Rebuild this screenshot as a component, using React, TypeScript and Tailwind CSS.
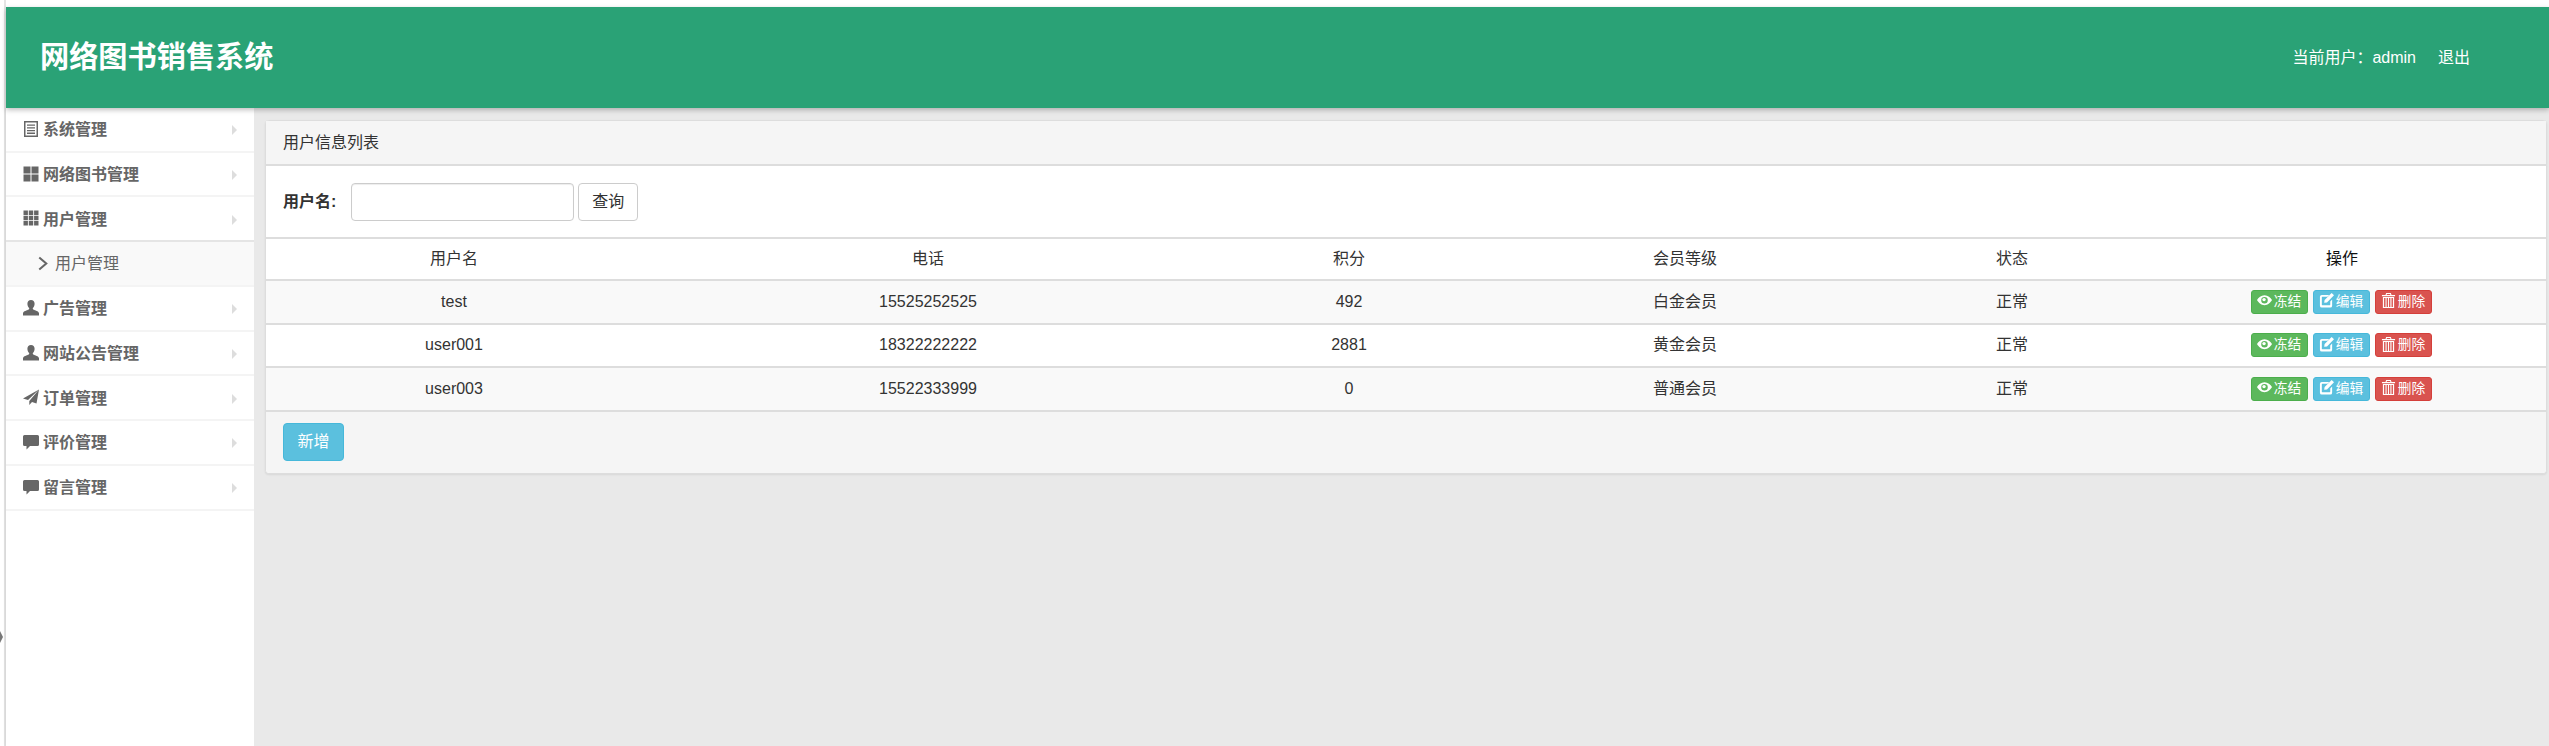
import React from "react";

const font = { fontFamily: '"Liberation Sans", "Noto Sans CJK SC", sans-serif' };

type IconProps = { className?: string };
const ListAlt = ({ className }: IconProps) => (
  <svg viewBox="0 0 16 16" className={className} fill="currentColor"><path fillRule="evenodd" d="M1 0h14v16H1zM2.500 1.500v13h11v-13z" /><path d="M4 3.500h8v1.300H4zM4 6.200h8v1.300H4zM4 8.900h8v1.300H4zM4 11.600h8v1.300H4z" /></svg>
);
const ThLarge = ({ className }: IconProps) => (
  <svg viewBox="0 0 16 16" className={className} fill="currentColor"><path d="M.5 .5h7v7h-7zM8.500 .5h7v7h-7zM.5 8.500h7v7h-7zM8.500 8.500h7v7h-7z" /></svg>
);
const Th = ({ className }: IconProps) => (
  <svg viewBox="0 0 16 16" className={className} fill="currentColor"><path d="M.5 .5h4.400v4.400H.5zM5.800 .5h4.400v4.400H5.800zM11.100 .5h4.400v4.400h-4.400zM.5 5.800h4.400v4.400H.5zM5.800 5.800h4.400v4.400H5.800zM11.100 5.800h4.400v4.400h-4.400zM.5 11.100h4.400v4.400H.5zM5.800 11.100h4.400v4.400H5.800zM11.100 11.100h4.400v4.400h-4.400z" /></svg>
);
const User = ({ className }: IconProps) => (
  <svg viewBox="0 0 16 16" className={className} fill="currentColor"><path d="M8 0c2.200 0 3.600 1.600 3.600 3.800 0 1.800-.8 3.400-1.700 4.300-.3.4-.2 1 .3 1.300 2 .9 5.300 1.700 5.800 3.600V15.500H0V13c.5-1.900 3.800-2.700 5.800-3.600.5-.3.6-.9.3-1.300C5.200 7.200 4.400 5.600 4.400 3.800 4.400 1.600 5.800 0 8 0z" /></svg>
);
const Send = ({ className }: IconProps) => (
  <svg viewBox="0 0 16 16" className={className} fill="currentColor"><path d="M16 .5 0 9.500l5 1.500zM16 .5 6.300 12v4l2.700-3 4.500 1.500z" /></svg>
);
const Comment = ({ className }: IconProps) => (
  <svg viewBox="0 0 16 16" className={className} fill="currentColor"><path d="M1.500 1h13A1.500 1.500 0 0 1 16 2.500v8a1.500 1.500 0 0 1-1.500 1.500H7l-3.500 3.500V12h-2A1.500 1.500 0 0 1 0 10.500v-8A1.500 1.500 0 0 1 1.500 1z" /></svg>
);
const Eye = ({ className }: IconProps) => (
  <svg viewBox="0 0 16 16" className={className} fill="currentColor"><path fillRule="evenodd" d="M8 2.500c3.600 0 6.500 2.500 8 5-1.500 2.700-4.400 5.500-8 5.500S1.500 10.200 0 7.500c1.500-2.500 4.400-5 8-5zM8 4.200a3.500 3.500 0 1 0 0 7 3.500 3.500 0 0 0 0-7z" /><circle cx="7.500" cy="7" r="1.800" /></svg>
);
const Edit = ({ className }: IconProps) => (
  <svg viewBox="0 0 16 16" className={className} fill="currentColor"><path d="M3 2h8l-2 2H3.500A.5.500 0 0 0 3 4.500v8a.5.500 0 0 0 .5.500h8a.5.500 0 0 0 .5-.5V9l2-2v6.500a2 2 0 0 1-2 2H3a2 2 0 0 1-2-2V4a2 2 0 0 1 2-2z" /><path d="M13.500 0 16 2.500 8.500 10 5.500 10.500 6 7.500z" /></svg>
);
const Trash = ({ className }: IconProps) => (
  <svg viewBox="0 0 16 16" className={className} fill="currentColor"><path fillRule="evenodd" d="M5.500 0h5l.7 2H15v1.400H1V2h3.800zM6.300 1.100 6 2h4l-.3-.9z" /><path fillRule="evenodd" d="M2 4.200h12V16H2zM3.300 5.300v9.500h1.500V5.300zM6 5.300v9.500h1.400V5.300zM8.600 5.300v9.500H10V5.300zM11.200 5.300v9.500h1.500V5.300z" /></svg>
);

const menu: { label: string; Icon: React.FC<IconProps>; open?: boolean }[] = [
  { label: "系统管理", Icon: ListAlt },
  { label: "网络图书管理", Icon: ThLarge },
  { label: "用户管理", Icon: Th, open: true },
  { label: "广告管理", Icon: User },
  { label: "网站公告管理", Icon: User },
  { label: "订单管理", Icon: Send },
  { label: "评价管理", Icon: Comment },
  { label: "留言管理", Icon: Comment },
];

const rows = [
  ["test", "15525252525", "492", "白金会员", "正常"],
  ["user001", "18322222222", "2881", "黄金会员", "正常"],
  ["user003", "15522333999", "0", "普通会员", "正常"],
];

const widths = ["w-[376px]", "w-[572px]", "w-[270px]", "w-[402px]", "w-[252px]"];
const heads = ["用户名", "电话", "积分", "会员等级", "状态"];

function ActionBtn({ color, Icon, label }: { color: string; Icon: React.FC<IconProps>; label: string }) {
  return (
    <button className={`inline-flex h-[24px] w-[57px] items-center justify-center gap-[2px] rounded-[3px] border text-[13.7px] leading-none text-white ${color}`}>
      <Icon className="mb-[2px] h-[15px] w-[15px] shrink-0" />
      <span>{label}</span>
    </button>
  );
}

export default function App() {
  return (
    <div className="relative flex h-[746px] w-[2549px] overflow-hidden bg-white text-[16px] text-[#333]" style={font}>
      <div className="w-[4px] shrink-0 bg-white" />
      <div className="w-[2px] shrink-0 bg-[#e4e4e4]" />
      <div className="absolute left-0 top-[631px] h-0 w-0 border-y-[6px] border-l-[3px] border-y-transparent border-l-[#777]" />
      <div className="flex min-w-0 flex-1 flex-col pt-[7px]">
        <header className="relative z-10 flex h-[101px] shrink-0 items-center justify-between bg-[#2aa276] pl-[34px] pr-[79px] shadow-[0_2px_5px_rgba(0,0,0,0.25)]">
          <h1 className="text-[29.200px] font-bold text-white">网络图书销售系统</h1>
          <div className="flex gap-[22px] text-[16px] text-white">
            <span>当前用户：admin</span>
            <span>退出</span>
          </div>
        </header>
        <div className="flex min-h-0 flex-1">
          <aside className="w-[248px] shrink-0 bg-white shadow-[1px_0_4px_rgba(0,0,0,0.2)]">
            {menu.map(({ label, Icon, open }) => (
              <React.Fragment key={label}>
                <div className={`flex h-[44.700px] items-center border-b-2 pl-[17px] pr-[17px] pt-[2px] font-bold text-[#666] ${open ? "border-[#e5e5e5]" : "border-[#f4f4f4]"}`}>
                  <Icon className="mb-[3px] mr-[4px] h-[16px] w-[16px] shrink-0" />
                  <span className="flex-1">{label}</span>
                  <span className="h-0 w-0 border-y-[5px] border-l-[5px] border-y-transparent border-l-[#ddd]" />
                </div>
                {open && (
                  <div className="flex h-[45px] items-center border-b-2 border-[#f4f4f4] bg-[#f9f9f9] pl-[31px] text-[#666]">
                    <svg viewBox="0 0 12 16" className="mr-[6px] h-[15px] w-[12px]" fill="none" stroke="currentColor" strokeWidth="2.200"><path d="M2 1.500 9.500 8 2 14.500" /></svg>
                    <span>用户管理</span>
                  </div>
                )}
              </React.Fragment>
            ))}
          </aside>
          <main className="min-w-0 flex-1 bg-[#e9e9e9] pl-[11px] pr-[2px] pt-[12px]">
            <section className="rounded-[4px] border border-[#dddddd] bg-white shadow-[0_1px_2px_rgba(0,0,0,0.08)]">
              <div className="flex h-[45px] items-center border-b-2 border-[#dddddd] bg-[#f5f5f5] pl-[17px]">用户信息列表</div>
              <div className="flex h-[73px] items-center border-b-2 border-[#dddddd] pl-[17px]">
                <label className="mr-[15px] font-bold">用户名:</label>
                <input className="h-[38px] w-[223px] rounded-[4px] border border-[#ccc] bg-white shadow-[inset_0_1px_1px_rgba(0,0,0,0.075)]" />
                <button className="ml-[4px] h-[38px] w-[60px] rounded-[4px] border border-[#ccc] bg-white">查询</button>
              </div>
              <table className="w-full table-fixed border-collapse text-center">
                <thead>
                  <tr className="h-[41px] border-b-2 border-[#dddddd]">
                    {heads.map((h, i) => (
                      <th key={h} className={`font-normal ${widths[i]}`}>{h}</th>
                    ))}
                    <th className="font-normal text-[#111]">操作</th>
                  </tr>
                </thead>
                <tbody>
                  {rows.map((r, i) => (
                    <tr key={r[0]} className={`h-[43.500px] border-b-2 border-[#dddddd] ${i % 2 === 0 ? "bg-[#f9f9f9]" : "bg-white"}`}>
                      {r.map((c) => (
                        <td key={c}>{c}</td>
                      ))}
                      <td>
                        <div className="flex items-center justify-center gap-[5px] pr-[2px]">
                          <ActionBtn color="bg-[#5cb85c] border-[#4cae4c]" Icon={Eye} label="冻结" />
                          <ActionBtn color="bg-[#5bc0de] border-[#46b8da]" Icon={Edit} label="编辑" />
                          <ActionBtn color="bg-[#d9534f] border-[#d43f3a]" Icon={Trash} label="删除" />
                        </div>
                      </td>
                    </tr>
                  ))}
                </tbody>
              </table>
              <div className="flex h-[61px] items-center rounded-b-[4px] bg-[#f5f5f5] pl-[17px]">
                <button className="h-[38px] w-[61px] rounded-[4px] border border-[#46b8da] bg-[#5bc0de] text-white">新增</button>
              </div>
            </section>
          </main>
        </div>
      </div>
    </div>
  );
}
